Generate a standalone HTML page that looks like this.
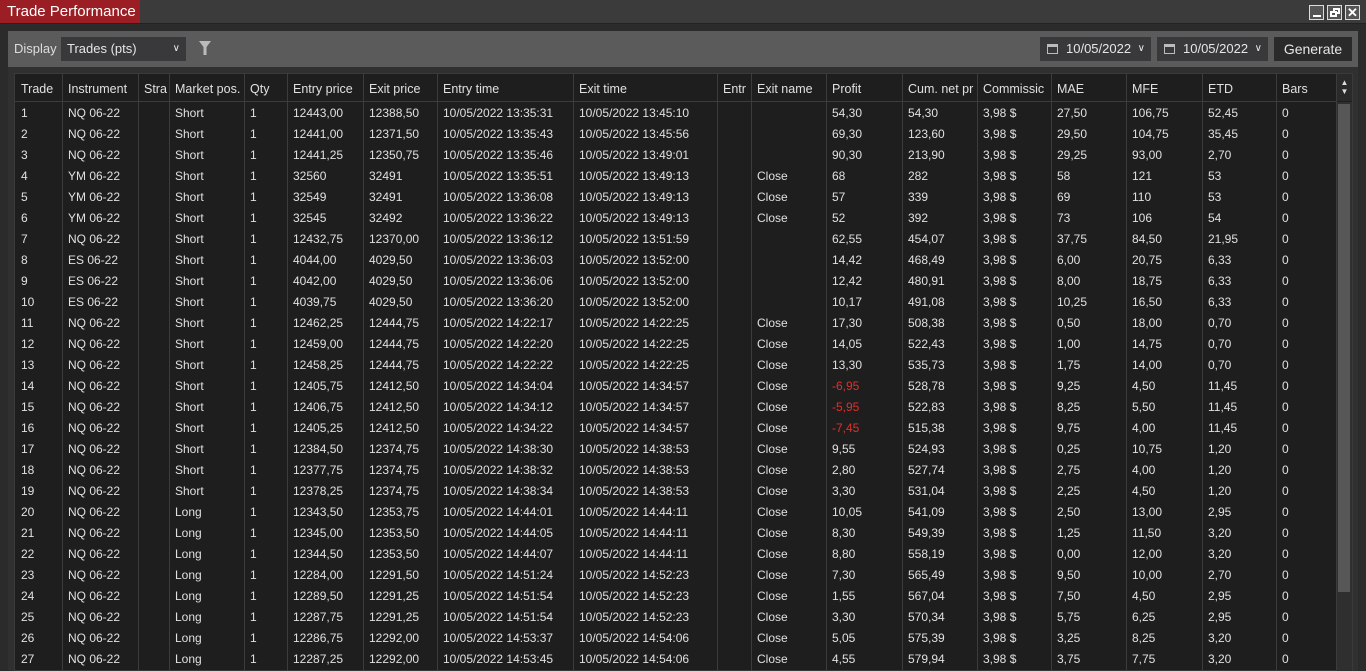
<!DOCTYPE html>
<html><head><meta charset="utf-8"><style>
*{margin:0;padding:0;box-sizing:border-box}
body{width:1366px;height:671px;overflow:hidden;background:#2b2b2c;font-family:"Liberation Sans",Arial,sans-serif;font-size:12px;color:#e0e0e0;position:relative}
.titlebar{position:absolute;left:0;top:0;width:1366px;height:24px;background:#3b3b3c;border-bottom:1px solid #222}
.tab{position:absolute;left:0;top:0;width:140px;height:23px;background:#9a1e24;color:#fff;font-size:15px;line-height:23px;padding-left:7px}
.wb{position:absolute;top:5px;width:15px;height:15px;border:1px solid #ddd;background:#555}
.panel{position:absolute;left:8px;top:31px;width:1350px;height:640px;background:#303031}
.tool{position:absolute;left:8px;top:31px;width:1350px;height:36px;background:#5b5b5c}
.dd{position:absolute;top:37px;height:24px;background:#39393c;color:#e6e6e6;font-size:13px;line-height:24px}
.grid{position:absolute;left:14px;top:73px;width:1339px;height:598px;background:#1e1e1e;border:1px solid #3a3a3a}
.vl{position:absolute;top:73px;height:598px;width:1px;background:#3c3c3c}
.hl{position:absolute;left:14px;top:101px;width:1322px;height:1px;background:#3c3c3c}
table{position:absolute;left:15px;top:75px;border-collapse:collapse;table-layout:fixed}
td,th{height:21px;padding:0 0 0 6px;white-space:nowrap;overflow:hidden;font-weight:normal;text-align:left;font-size:12px;color:#e0e0e0}
th{height:27px;font-size:12.5px}
.r{color:#e0302a}
</style></head><body>
<div class="titlebar"><div class="tab">Trade Performance</div>
<div class="wb" style="left:1309px"><div style="position:absolute;left:3px;bottom:2px;width:8px;height:2px;background:#fff"></div></div>
<div class="wb" style="left:1327px"><div style="position:absolute;left:5px;top:2px;width:7px;height:6px;border:2px solid #fff"></div><div style="position:absolute;left:2px;top:5px;width:7px;height:6px;border:2px solid #fff;background:#555"></div></div>
<div class="wb" style="left:1345px;color:#fff;font-size:13px;line-height:13px;text-align:center;font-weight:bold">✕</div>
</div>
<div class="panel"></div>
<div class="tool"></div>
<div style="position:absolute;left:14px;top:41px;font-size:13px;color:#ddd">Display</div>
<div class="dd" style="left:61px;width:125px;padding-left:6px">Trades (pts)<span style="position:absolute;right:6px;font-size:10px">&#x2228;</span></div>
<svg style="position:absolute;left:198px;top:40px" width="14" height="16"><path d="M1 1H13L8.5 7V15H5.5V7Z" fill="#bbb"/></svg>
<div class="dd" style="left:1040px;width:111px;padding-left:26px">10/05/2022<span style="position:absolute;left:7px;top:7px;width:11px;height:10px;border:1px solid #bbb;border-top:3px solid #bbb"></span><span style="position:absolute;right:6px;font-size:10px">&#x2228;</span></div>
<div class="dd" style="left:1157px;width:111px;padding-left:26px">10/05/2022<span style="position:absolute;left:7px;top:7px;width:11px;height:10px;border:1px solid #bbb;border-top:3px solid #bbb"></span><span style="position:absolute;right:6px;font-size:10px">&#x2228;</span></div>
<div class="dd" style="left:1274px;width:78px;background:#2a2a2b;text-align:center;font-size:14px">Generate</div>
<div class="grid"></div>
<div class="hl"></div>
<div class="vl" style="left:62px"></div><div class="vl" style="left:138px"></div><div class="vl" style="left:169px"></div><div class="vl" style="left:244px"></div><div class="vl" style="left:287px"></div><div class="vl" style="left:363px"></div><div class="vl" style="left:437px"></div><div class="vl" style="left:573px"></div><div class="vl" style="left:717px"></div><div class="vl" style="left:751px"></div><div class="vl" style="left:826px"></div><div class="vl" style="left:902px"></div><div class="vl" style="left:977px"></div><div class="vl" style="left:1051px"></div><div class="vl" style="left:1126px"></div><div class="vl" style="left:1202px"></div><div class="vl" style="left:1276px"></div><div class="vl" style="left:1336px"></div>
<div style="position:absolute;left:1337px;top:74px;width:15px;height:27px;background:#2a2a2a;color:#ddd;font-size:8px;line-height:9px;text-align:center;padding-top:4px">▲<br>▼</div>
<div style="position:absolute;left:1337px;top:102px;width:15px;height:569px;background:#2f2f2f"></div>
<div style="position:absolute;left:1338px;top:104px;width:12px;height:488px;background:#575757"></div>
<table>
<colgroup><col style="width:47px"><col style="width:76px"><col style="width:31px"><col style="width:75px"><col style="width:43px"><col style="width:76px"><col style="width:74px"><col style="width:136px"><col style="width:144px"><col style="width:34px"><col style="width:75px"><col style="width:76px"><col style="width:75px"><col style="width:74px"><col style="width:75px"><col style="width:76px"><col style="width:74px"><col style="width:60px"></colgroup>
<tr><th>Trade</th><th>Instrument</th><th>Stra</th><th>Market pos.</th><th>Qty</th><th>Entry price</th><th>Exit price</th><th>Entry time</th><th>Exit time</th><th>Entr</th><th>Exit name</th><th>Profit</th><th>Cum. net pr</th><th>Commissic</th><th>MAE</th><th>MFE</th><th>ETD</th><th>Bars</th></tr>
<tr><td>1</td><td>NQ 06-22</td><td></td><td>Short</td><td>1</td><td>12443,00</td><td>12388,50</td><td>10/05/2022 13:35:31</td><td>10/05/2022 13:45:10</td><td></td><td></td><td>54,30</td><td>54,30</td><td>3,98 $</td><td>27,50</td><td>106,75</td><td>52,45</td><td>0</td></tr>
<tr><td>2</td><td>NQ 06-22</td><td></td><td>Short</td><td>1</td><td>12441,00</td><td>12371,50</td><td>10/05/2022 13:35:43</td><td>10/05/2022 13:45:56</td><td></td><td></td><td>69,30</td><td>123,60</td><td>3,98 $</td><td>29,50</td><td>104,75</td><td>35,45</td><td>0</td></tr>
<tr><td>3</td><td>NQ 06-22</td><td></td><td>Short</td><td>1</td><td>12441,25</td><td>12350,75</td><td>10/05/2022 13:35:46</td><td>10/05/2022 13:49:01</td><td></td><td></td><td>90,30</td><td>213,90</td><td>3,98 $</td><td>29,25</td><td>93,00</td><td>2,70</td><td>0</td></tr>
<tr><td>4</td><td>YM 06-22</td><td></td><td>Short</td><td>1</td><td>32560</td><td>32491</td><td>10/05/2022 13:35:51</td><td>10/05/2022 13:49:13</td><td></td><td>Close</td><td>68</td><td>282</td><td>3,98 $</td><td>58</td><td>121</td><td>53</td><td>0</td></tr>
<tr><td>5</td><td>YM 06-22</td><td></td><td>Short</td><td>1</td><td>32549</td><td>32491</td><td>10/05/2022 13:36:08</td><td>10/05/2022 13:49:13</td><td></td><td>Close</td><td>57</td><td>339</td><td>3,98 $</td><td>69</td><td>110</td><td>53</td><td>0</td></tr>
<tr><td>6</td><td>YM 06-22</td><td></td><td>Short</td><td>1</td><td>32545</td><td>32492</td><td>10/05/2022 13:36:22</td><td>10/05/2022 13:49:13</td><td></td><td>Close</td><td>52</td><td>392</td><td>3,98 $</td><td>73</td><td>106</td><td>54</td><td>0</td></tr>
<tr><td>7</td><td>NQ 06-22</td><td></td><td>Short</td><td>1</td><td>12432,75</td><td>12370,00</td><td>10/05/2022 13:36:12</td><td>10/05/2022 13:51:59</td><td></td><td></td><td>62,55</td><td>454,07</td><td>3,98 $</td><td>37,75</td><td>84,50</td><td>21,95</td><td>0</td></tr>
<tr><td>8</td><td>ES 06-22</td><td></td><td>Short</td><td>1</td><td>4044,00</td><td>4029,50</td><td>10/05/2022 13:36:03</td><td>10/05/2022 13:52:00</td><td></td><td></td><td>14,42</td><td>468,49</td><td>3,98 $</td><td>6,00</td><td>20,75</td><td>6,33</td><td>0</td></tr>
<tr><td>9</td><td>ES 06-22</td><td></td><td>Short</td><td>1</td><td>4042,00</td><td>4029,50</td><td>10/05/2022 13:36:06</td><td>10/05/2022 13:52:00</td><td></td><td></td><td>12,42</td><td>480,91</td><td>3,98 $</td><td>8,00</td><td>18,75</td><td>6,33</td><td>0</td></tr>
<tr><td>10</td><td>ES 06-22</td><td></td><td>Short</td><td>1</td><td>4039,75</td><td>4029,50</td><td>10/05/2022 13:36:20</td><td>10/05/2022 13:52:00</td><td></td><td></td><td>10,17</td><td>491,08</td><td>3,98 $</td><td>10,25</td><td>16,50</td><td>6,33</td><td>0</td></tr>
<tr><td>11</td><td>NQ 06-22</td><td></td><td>Short</td><td>1</td><td>12462,25</td><td>12444,75</td><td>10/05/2022 14:22:17</td><td>10/05/2022 14:22:25</td><td></td><td>Close</td><td>17,30</td><td>508,38</td><td>3,98 $</td><td>0,50</td><td>18,00</td><td>0,70</td><td>0</td></tr>
<tr><td>12</td><td>NQ 06-22</td><td></td><td>Short</td><td>1</td><td>12459,00</td><td>12444,75</td><td>10/05/2022 14:22:20</td><td>10/05/2022 14:22:25</td><td></td><td>Close</td><td>14,05</td><td>522,43</td><td>3,98 $</td><td>1,00</td><td>14,75</td><td>0,70</td><td>0</td></tr>
<tr><td>13</td><td>NQ 06-22</td><td></td><td>Short</td><td>1</td><td>12458,25</td><td>12444,75</td><td>10/05/2022 14:22:22</td><td>10/05/2022 14:22:25</td><td></td><td>Close</td><td>13,30</td><td>535,73</td><td>3,98 $</td><td>1,75</td><td>14,00</td><td>0,70</td><td>0</td></tr>
<tr><td>14</td><td>NQ 06-22</td><td></td><td>Short</td><td>1</td><td>12405,75</td><td>12412,50</td><td>10/05/2022 14:34:04</td><td>10/05/2022 14:34:57</td><td></td><td>Close</td><td class="r">-6,95</td><td>528,78</td><td>3,98 $</td><td>9,25</td><td>4,50</td><td>11,45</td><td>0</td></tr>
<tr><td>15</td><td>NQ 06-22</td><td></td><td>Short</td><td>1</td><td>12406,75</td><td>12412,50</td><td>10/05/2022 14:34:12</td><td>10/05/2022 14:34:57</td><td></td><td>Close</td><td class="r">-5,95</td><td>522,83</td><td>3,98 $</td><td>8,25</td><td>5,50</td><td>11,45</td><td>0</td></tr>
<tr><td>16</td><td>NQ 06-22</td><td></td><td>Short</td><td>1</td><td>12405,25</td><td>12412,50</td><td>10/05/2022 14:34:22</td><td>10/05/2022 14:34:57</td><td></td><td>Close</td><td class="r">-7,45</td><td>515,38</td><td>3,98 $</td><td>9,75</td><td>4,00</td><td>11,45</td><td>0</td></tr>
<tr><td>17</td><td>NQ 06-22</td><td></td><td>Short</td><td>1</td><td>12384,50</td><td>12374,75</td><td>10/05/2022 14:38:30</td><td>10/05/2022 14:38:53</td><td></td><td>Close</td><td>9,55</td><td>524,93</td><td>3,98 $</td><td>0,25</td><td>10,75</td><td>1,20</td><td>0</td></tr>
<tr><td>18</td><td>NQ 06-22</td><td></td><td>Short</td><td>1</td><td>12377,75</td><td>12374,75</td><td>10/05/2022 14:38:32</td><td>10/05/2022 14:38:53</td><td></td><td>Close</td><td>2,80</td><td>527,74</td><td>3,98 $</td><td>2,75</td><td>4,00</td><td>1,20</td><td>0</td></tr>
<tr><td>19</td><td>NQ 06-22</td><td></td><td>Short</td><td>1</td><td>12378,25</td><td>12374,75</td><td>10/05/2022 14:38:34</td><td>10/05/2022 14:38:53</td><td></td><td>Close</td><td>3,30</td><td>531,04</td><td>3,98 $</td><td>2,25</td><td>4,50</td><td>1,20</td><td>0</td></tr>
<tr><td>20</td><td>NQ 06-22</td><td></td><td>Long</td><td>1</td><td>12343,50</td><td>12353,75</td><td>10/05/2022 14:44:01</td><td>10/05/2022 14:44:11</td><td></td><td>Close</td><td>10,05</td><td>541,09</td><td>3,98 $</td><td>2,50</td><td>13,00</td><td>2,95</td><td>0</td></tr>
<tr><td>21</td><td>NQ 06-22</td><td></td><td>Long</td><td>1</td><td>12345,00</td><td>12353,50</td><td>10/05/2022 14:44:05</td><td>10/05/2022 14:44:11</td><td></td><td>Close</td><td>8,30</td><td>549,39</td><td>3,98 $</td><td>1,25</td><td>11,50</td><td>3,20</td><td>0</td></tr>
<tr><td>22</td><td>NQ 06-22</td><td></td><td>Long</td><td>1</td><td>12344,50</td><td>12353,50</td><td>10/05/2022 14:44:07</td><td>10/05/2022 14:44:11</td><td></td><td>Close</td><td>8,80</td><td>558,19</td><td>3,98 $</td><td>0,00</td><td>12,00</td><td>3,20</td><td>0</td></tr>
<tr><td>23</td><td>NQ 06-22</td><td></td><td>Long</td><td>1</td><td>12284,00</td><td>12291,50</td><td>10/05/2022 14:51:24</td><td>10/05/2022 14:52:23</td><td></td><td>Close</td><td>7,30</td><td>565,49</td><td>3,98 $</td><td>9,50</td><td>10,00</td><td>2,70</td><td>0</td></tr>
<tr><td>24</td><td>NQ 06-22</td><td></td><td>Long</td><td>1</td><td>12289,50</td><td>12291,25</td><td>10/05/2022 14:51:54</td><td>10/05/2022 14:52:23</td><td></td><td>Close</td><td>1,55</td><td>567,04</td><td>3,98 $</td><td>7,50</td><td>4,50</td><td>2,95</td><td>0</td></tr>
<tr><td>25</td><td>NQ 06-22</td><td></td><td>Long</td><td>1</td><td>12287,75</td><td>12291,25</td><td>10/05/2022 14:51:54</td><td>10/05/2022 14:52:23</td><td></td><td>Close</td><td>3,30</td><td>570,34</td><td>3,98 $</td><td>5,75</td><td>6,25</td><td>2,95</td><td>0</td></tr>
<tr><td>26</td><td>NQ 06-22</td><td></td><td>Long</td><td>1</td><td>12286,75</td><td>12292,00</td><td>10/05/2022 14:53:37</td><td>10/05/2022 14:54:06</td><td></td><td>Close</td><td>5,05</td><td>575,39</td><td>3,98 $</td><td>3,25</td><td>8,25</td><td>3,20</td><td>0</td></tr>
<tr><td>27</td><td>NQ 06-22</td><td></td><td>Long</td><td>1</td><td>12287,25</td><td>12292,00</td><td>10/05/2022 14:53:45</td><td>10/05/2022 14:54:06</td><td></td><td>Close</td><td>4,55</td><td>579,94</td><td>3,98 $</td><td>3,75</td><td>7,75</td><td>3,20</td><td>0</td></tr>
</table>
</body></html>
